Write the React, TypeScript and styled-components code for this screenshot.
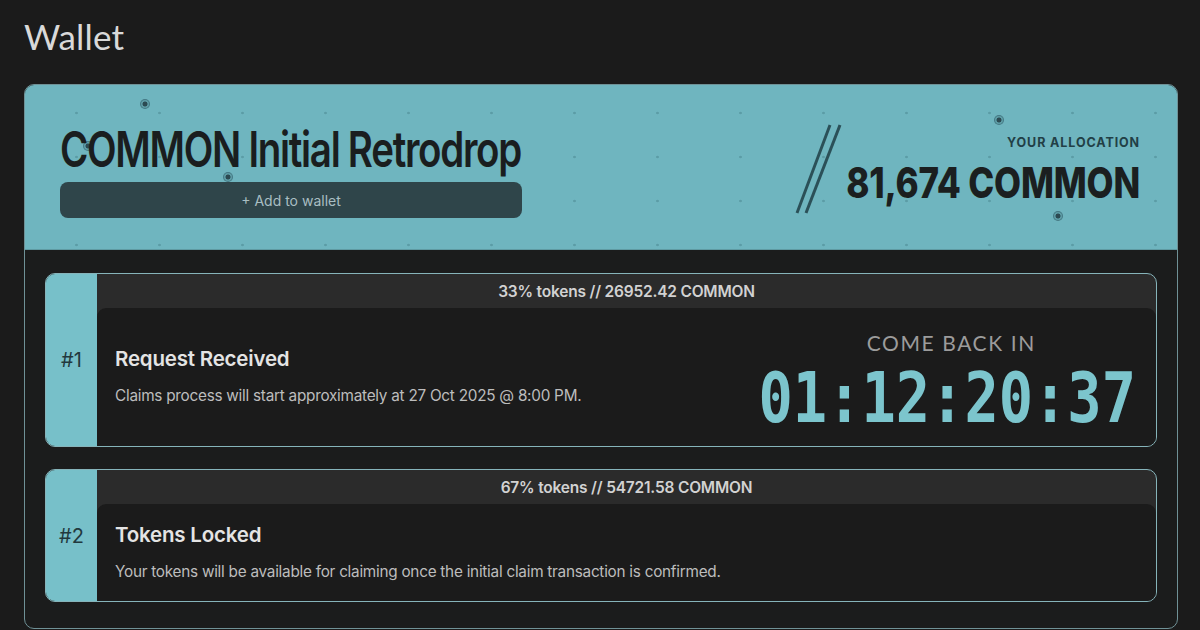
import React from "react";
import styled, { createGlobalStyle } from "styled-components";

const GlobalStyle = createGlobalStyle`
  html, body { margin: 0; padding: 0; background: #1b1b1b; }
  body { font-family: Inter, "Noto Sans", sans-serif; color: #e0e0e0; }
  * { box-sizing: border-box; }
`;

const Page = styled.div`
  width: 1200px;
  height: 630px;
  overflow: hidden;
  padding: 14px 22px 0 24px;
  display: flex;
  flex-direction: column;
`;

const PageTitle = styled.h1`
  margin: 0;
  height: 70px;
  font-family: Lato, "Noto Sans", sans-serif;
  font-weight: 400;
  font-size: 35px;
  line-height: 44px;
  color: #d9d9d9;
  letter-spacing: 0.2px;
`;

const Card = styled.section`
  width: 1154px;
  height: 545px;
  border: 1px solid #6f9196;
  border-radius: 10px;
  overflow: hidden;
  background: #1b1c1c;
  display: flex;
  flex-direction: column;
`;

const Hero = styled.div`
  position: relative;
  height: 165px;
  flex: none;
  background-color: #6fb5bf;
  background-image: radial-gradient(circle, rgba(40, 90, 100, 0.28) 1px, transparent 1.6px);
  background-size: 83px 44px;
  background-position: 10px 6px;
  border-bottom: 1px solid #5f9aa2;
  padding: 40px 37px 0 35px;
  display: flex;
  justify-content: space-between;
  align-items: flex-start;
`;

const HeroLeft = styled.div`
  width: 462px;
  display: flex;
  flex-direction: column;
  gap: 5px;
  position: relative;
  z-index: 1;
`;

const Title = styled.h2`
  margin: 0;
  height: 52px;
  font-family: Inter, sans-serif;
  font-weight: 600;
  font-size: 38.5px;
  line-height: 52px;
  letter-spacing: -1.3px;
  color: #1a1e1f;
  white-space: nowrap;
  transform: scaleY(1.28);
  transform-origin: center 60%;
`;

const AddButton = styled.button`
  height: 36px;
  width: 100%;
  border: none;
  border-radius: 8px;
  background: #2f454a;
  color: #a9bec2;
  font-family: Inter, sans-serif;
  font-size: 14px;
  font-weight: 400;
  cursor: pointer;
`;

const HeroRight = styled.div`
  display: flex;
  align-items: flex-start;
  gap: 3px;
  margin-top: -4px;
  position: relative;
  z-index: 1;
`;

const Allocation = styled.div`
  display: flex;
  flex-direction: column;
  align-items: flex-end;
  padding-top: 14px;
`;

const AllocLabel = styled.div`
  font-family: Inter, sans-serif;
  font-weight: 700;
  font-size: 12.5px;
  letter-spacing: 0.9px;
  color: #223f46;
  line-height: 16px;
`;

const AllocValue = styled.div`
  margin-top: 11px;
  font-family: Inter, sans-serif;
  font-weight: 800;
  font-size: 35px;
  line-height: 40px;
  letter-spacing: -0.2px;
  color: #1b1f20;
  white-space: nowrap;
  transform: scaleY(1.22);
`;

const Pin = styled.span<{ $x: number; $y: number }>`
  position: absolute;
  left: ${(p) => p.$x - 5}px;
  top: ${(p) => p.$y - 5}px;
  width: 10px;
  height: 10px;
  border-radius: 50%;
  border: 1px solid rgba(40, 80, 90, 0.45);
  background: radial-gradient(circle, #2c4a52 0 2.2px, rgba(60, 110, 120, 0.35) 2.8px);
`;

const Steps = styled.div`
  flex: 1;
  padding: 23px 20px 26px 20px;
  display: flex;
  flex-direction: column;
  gap: 22px;
`;

const StepCard = styled.div<{ $h: number }>`
  height: ${(p) => p.$h}px;
  border: 1.5px solid #86b4ba;
  border-radius: 10px;
  overflow: hidden;
  display: grid;
  grid-template-columns: 51px 1fr;
  background: #2b2b2b;
`;

const StepIndex = styled.div`
  background: #77c0c9;
  display: flex;
  align-items: center;
  justify-content: center;
  font-family: Inter, sans-serif;
  font-size: 20px;
  font-weight: 400;
  color: #22393e;
`;

const StepMain = styled.div`
  display: flex;
  flex-direction: column;
  min-width: 0;
`;

const StepHeader = styled.div`
  height: 34px;
  flex: none;
  display: flex;
  align-items: center;
  justify-content: center;
  font-family: Inter, sans-serif;
  font-weight: 600;
  font-size: 15.5px;
  color: #d2d2d2;
  letter-spacing: -0.2px;
`;

const StepBody = styled.div`
  flex: 1;
  background: #1b1b1b;
  border-radius: 9px 9px 0 0;
  display: flex;
  align-items: center;
  justify-content: space-between;
  padding: 0 20px 0 18px;
`;

const StepText = styled.div`
  display: flex;
  flex-direction: column;
  gap: 14px;
  margin-top: -2px;
`;

const StepTitle = styled.div`
  font-family: Inter, sans-serif;
  font-weight: 600;
  font-size: 20.5px;
  line-height: 26px;
  color: #e4e4e4;
  letter-spacing: -0.2px;
`;

const StepDesc = styled.div`
  font-family: Inter, sans-serif;
  font-size: 15.3px;
  line-height: 20px;
  color: #bdbdbd;
  letter-spacing: -0.25px;
`;

const Countdown = styled.div`
  display: flex;
  flex-direction: column;
  align-items: center;
  margin-top: 4px;
`;

const CountLabel = styled.div`
  font-family: Lato, "Noto Sans", sans-serif;
  font-size: 21px;
  line-height: 26px;
  letter-spacing: 1.6px;
  color: #9c9c9c;
  padding-left: 8px;
`;

const CountValue = styled.div`
  margin-top: 12px;
  font-family: "DejaVu Sans Mono", "Liberation Mono", monospace;
  font-weight: 700;
  font-size: 57px;
  line-height: 60px;
  color: #7cc5cd;
  transform: scaleY(1.22);
`;

const steps = [
  {
    n: 1,
    h: 174,
    header: "33% tokens // 26952.42 COMMON",
    title: "Request Received",
    desc: "Claims process will start approximately at 27 Oct 2025 @ 8:00 PM.",
    countdown: "01:12:20:37",
  },
  {
    n: 2,
    h: 133,
    header: "67% tokens // 54721.58 COMMON",
    title: "Tokens Locked",
    desc: "Your tokens will be available for claiming once the initial claim transaction is confirmed.",
  },
];

const pins = [
  { x: 120, y: 19 },
  { x: 63, y: 61 },
  { x: 203, y: 92 },
  { x: 974, y: 35 },
  { x: 1033, y: 131 },
];

export default function App() {
  return (
    <>
      <GlobalStyle />
      <Page>
        <PageTitle>Wallet</PageTitle>
        <Card>
          <Hero>
            {pins.map((p, i) => (
              <Pin key={i} $x={p.x} $y={p.y} />
            ))}
            <HeroLeft>
              <Title>COMMON Initial Retrodrop</Title>
              <AddButton>+ Add to wallet</AddButton>
            </HeroLeft>
            <HeroRight>
              <svg width="52" height="96" viewBox="0 0 52 96">
                <line x1="6" y1="92" x2="39" y2="4" stroke="#2b5058" strokeWidth="3" />
                <line x1="15" y1="92" x2="49" y2="4" stroke="#2b5058" strokeWidth="3" />
              </svg>
              <Allocation>
                <AllocLabel>YOUR ALLOCATION</AllocLabel>
                <AllocValue>81,674 COMMON</AllocValue>
              </Allocation>
            </HeroRight>
          </Hero>
          <Steps>
            {steps.map((s) => (
              <StepCard key={s.n} $h={s.h}>
                <StepIndex>#{s.n}</StepIndex>
                <StepMain>
                  <StepHeader>{s.header}</StepHeader>
                  <StepBody>
                    <StepText>
                      <StepTitle>{s.title}</StepTitle>
                      <StepDesc>{s.desc}</StepDesc>
                    </StepText>
                    {s.countdown && (
                      <Countdown>
                        <CountLabel>COME BACK IN</CountLabel>
                        <CountValue>{s.countdown}</CountValue>
                      </Countdown>
                    )}
                  </StepBody>
                </StepMain>
              </StepCard>
            ))}
          </Steps>
        </Card>
      </Page>
    </>
  );
}
